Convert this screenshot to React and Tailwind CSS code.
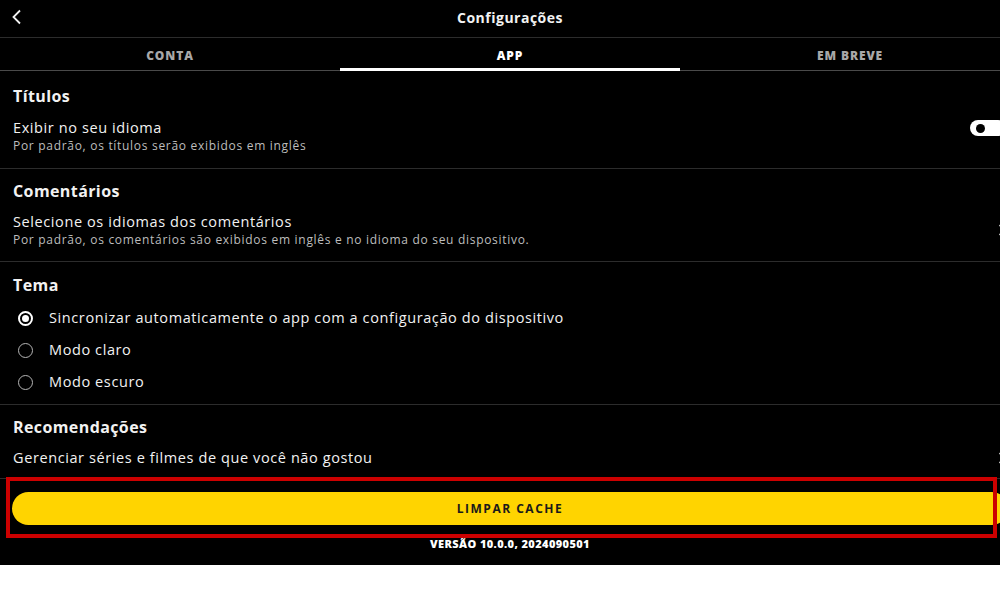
import React from "react";

const font = { fontFamily: '"Open Sans", "Liberation Sans", sans-serif' };

function Radio({ checked }) {
  return checked ? (
    <span className="flex h-[15px] w-[15px] shrink-0 items-center justify-center rounded-full border-2 border-white">
      <span className="h-[7px] w-[7px] rounded-full bg-white" />
    </span>
  ) : (
    <span className="h-[15px] w-[15px] shrink-0 rounded-full border-[1.5px] border-[#b5b5b5]" />
  );
}

function Chevron() {
  return (
    <svg width="8" height="12" viewBox="0 0 8 12" className="shrink-0">
      <path d="M1.5 1 L6.5 6 L1.5 11" stroke="#d0d0d0" strokeWidth="1.6" fill="none" />
    </svg>
  );
}

const title = "text-[16px] font-bold leading-[20px] tracking-[0.4px]";
const row = "text-[14.5px] leading-[20px] tracking-[0.6px]";
const sub = "text-[12px] leading-[16px] tracking-[0.7px] text-[#bdbdbd]";
const tab = "flex items-center justify-center pt-[3px] text-[12px] font-extrabold tracking-[0.9px]";

export default function App() {
  return (
    <div className="w-full overflow-hidden bg-white">
      <div className="relative h-[565px] w-full overflow-hidden bg-black text-[#f2f2f2]" style={font}>
        <div className="w-[1020px]">
          {/* Header */}
          <div className="relative flex h-[38px] items-center justify-center border-b border-[#2c2c2c] pb-[2px]">
            <svg width="12" height="16" viewBox="0 0 12 16" className="absolute left-[11px] top-[9px]">
              <path d="M9 1.5 L2.5 8 L9 14.5" stroke="#f2f2f2" strokeWidth="1.8" fill="none" />
            </svg>
            <span className="text-[14px] font-bold tracking-[0.5px]">Configurações</span>
          </div>
          {/* Tabs */}
          <div className="grid h-[33px] grid-cols-3 border-b border-[#4a4a4a]">
            <div className={tab + " text-[#a8a8a8]"}>CONTA</div>
            <div className={tab + " relative text-white"}>
              APP
              <span className="absolute bottom-[-1px] left-0 right-0 h-[3px] bg-white" />
            </div>
            <div className={tab + " text-[#a8a8a8]"}>EM BREVE</div>
          </div>

          {/* Títulos */}
          <div className="border-b border-[#2c2c2c] pb-[14px] pl-[13px] pr-[14px] pt-[15px]">
            <div className={title}>Títulos</div>
            <div className="mt-[12px] flex items-start justify-between">
              <div>
                <div className={row}>Exibir no seu idioma</div>
                <div className={sub}>Por padrão, os títulos serão exibidos em inglês</div>
              </div>
              <div className="mt-[2px] flex h-[16px] w-[36px] items-center rounded-full bg-white px-[6px]">
                <span className="h-[9px] w-[9px] rounded-full bg-black" />
              </div>
            </div>
          </div>

          {/* Comentários */}
          <div className="border-b border-[#2c2c2c] pb-[13px] pl-[13px] pr-[14px] pt-[12px]">
            <div className={title}>Comentários</div>
            <div className="mt-[11px] flex items-center justify-between">
              <div>
                <div className={row}>Selecione os idiomas dos comentários</div>
                <div className={sub}>Por padrão, os comentários são exibidos em inglês e no idioma do seu dispositivo.</div>
              </div>
              <Chevron />
            </div>
          </div>

          {/* Tema */}
          <div className="border-b border-[#2c2c2c] px-[13px] pb-[6px] pt-[13px]">
            <div className={title}>Tema</div>
            <div className="mt-[7px] flex flex-col">
              {[
                ["Sincronizar automaticamente o app com a configuração do dispositivo", true],
                ["Modo claro", false],
                ["Modo escuro", false],
              ].map(([label, checked]) => (
                <div key={label} className="flex h-[32px] items-center gap-[16px] pl-[5px]">
                  <Radio checked={checked} />
                  <span className={row}>{label}</span>
                </div>
              ))}
            </div>
          </div>

          {/* Recomendações */}
          <div className="border-b border-[#2c2c2c] pb-[10px] pl-[13px] pr-[14px] pt-[12px]">
            <div className={title}>Recomendações</div>
            <div className="mt-[11px] flex items-center justify-between">
              <div className={row}>Gerenciar séries e filmes de que você não gostou</div>
              <Chevron />
            </div>
          </div>

          {/* Button */}
          <div className="px-[12px] pt-[13px]">
            <div className="flex h-[33px] items-center justify-center rounded-full bg-[#ffd400] text-[12px] font-bold tracking-[1.5px] text-[#1a1a1a]">
              LIMPAR CACHE
            </div>
          </div>
          <div className="mt-[12px] text-center text-[11px] font-extrabold leading-[14px] tracking-[0.4px] text-white">
            VERSÃO 10.0.0, 2024090501
          </div>
        </div>

        {/* Annotation box */}
        <div className="absolute left-[6px] top-[477px] h-[61px] w-[991px] border-4 border-[#cc0000]" />
      </div>
    </div>
  );
}
